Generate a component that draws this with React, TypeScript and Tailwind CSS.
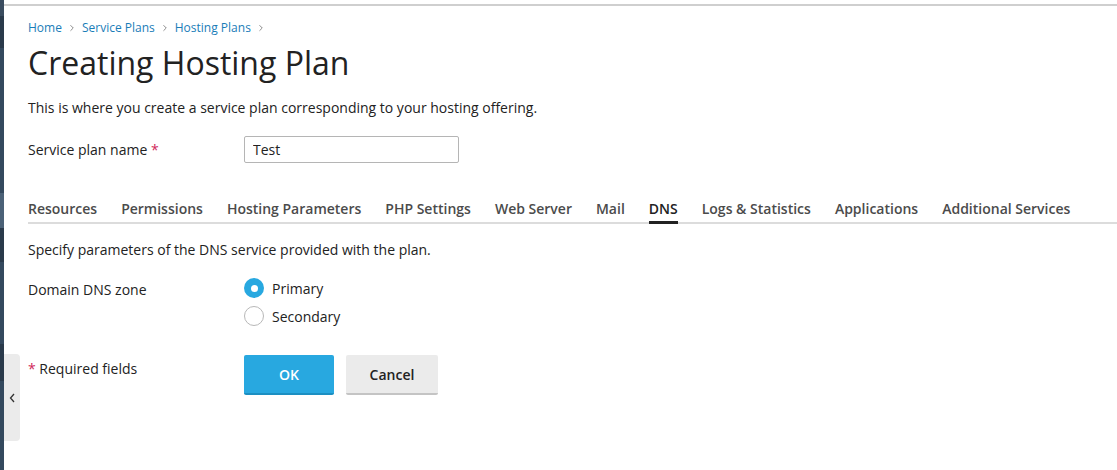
import { ChevronRight } from "lucide-react";

const tabs = [
  "Resources",
  "Permissions",
  "Hosting Parameters",
  "PHP Settings",
  "Web Server",
  "Mail",
  "DNS",
  "Logs & Statistics",
  "Applications",
  "Additional Services",
];

const crumbs = ["Home", "Service Plans", "Hosting Plans"];

function Radio({ checked, label }: { checked?: boolean; label: string }) {
  return (
    <label className="flex items-center gap-[8px] h-[28px]">
      {checked ? (
        <span className="w-[20px] h-[20px] rounded-full bg-[#28a8e0] flex items-center justify-center">
          <span className="w-[7px] h-[7px] rounded-full bg-white" />
        </span>
      ) : (
        <span className="w-[20px] h-[20px] rounded-full border border-[#b8b8b8] bg-white" />
      )}
      <span>{label}</span>
    </label>
  );
}

export default function App() {
  return (
    <div
      className="flex w-[1117px] h-[470px] bg-white text-[14px] text-[#222] overflow-hidden"
      style={{ fontFamily: '"Open Sans", sans-serif' }}
    >
      {/* sidebar edge */}
      <div className="w-[4px] shrink-0 flex flex-col bg-[#34495e]">
        <div className="h-[16px] bg-[#3a4c5f]" />
        <div className="h-[32px] bg-[#2a3a4b]" />
        <div className="h-[145px]" />
        <div className="h-[35px] bg-[#4b6177]" />
        <div className="h-[34px] bg-[#2a3a4b]" />
        <div className="h-[82px]" />
        <div className="h-[37px] bg-[#2a3a4b]" />
      </div>

      <div className="relative flex-1 flex flex-col">
        <div className="h-[4px]" />
        <div className="h-[2px] bg-[#cfcfcf]" />

        <button className="absolute left-0 top-[354px] w-[16px] h-[87px] bg-[#ebebeb] rounded-r-[4px] flex items-center justify-center text-[#333]">
          <svg width="8" height="12" viewBox="0 0 8 12" fill="none" stroke="currentColor" strokeWidth="1.3">
            <path d="M6 2L2.5 6L6 10" />
          </svg>
        </button>

        <div className="pl-[24px] flex flex-col">
          <nav className="mt-[14px] flex items-center text-[12px] text-[#1a7db8] leading-[16px]">
            {crumbs.map((c) => (
              <span key={c} className="flex items-center">
                <span>{c}</span>
                <ChevronRight size={10} strokeWidth={1.8} className="mx-[5px] text-[#666]" />
              </span>
            ))}
          </nav>

          <h1 className="mt-[5px] text-[32px] leading-[44px] text-[#222]">Creating Hosting Plan</h1>

          <p className="mt-[13px] leading-[20px]">
            This is where you create a service plan corresponding to your hosting offering.
          </p>

          <div className="mt-[18px] flex items-center">
            <div className="w-[216px]">
              Service plan name <span className="text-[#d02a5b]">*</span>
            </div>
            <input
              defaultValue="Test"
              className="w-[215px] h-[27px] border border-[#b5b5b5] rounded-[2px] px-[8px] text-[14px] text-[#222] outline-none"
            />
          </div>

          <div className="mt-[36px] flex gap-[24px] border-b-2 border-[#dcdcdc] font-semibold text-[#4b4b4b]">
            {tabs.map((t) => (
              <div
                key={t}
                className={
                  t === "DNS"
                    ? "pb-[1px] -mb-[2px] border-b-[3px] border-[#222] text-[#222] leading-[20px]"
                    : "pb-[3px] leading-[20px]"
                }
              >
                {t}
              </div>
            ))}
          </div>

          <p className="mt-[16px] leading-[20px]">Specify parameters of the DNS service provided with the plan.</p>

          <div className="mt-[14px] flex">
            <div className="w-[216px] pt-[6px] leading-[20px]">Domain DNS zone</div>
            <div className="flex flex-col">
              <Radio checked label="Primary" />
              <Radio label="Secondary" />
            </div>
          </div>

          <div className="mt-[25px] flex">
            <div className="w-[216px] pt-[4px] leading-[20px]">
              <span className="text-[#d02a5b]">*</span> Required fields
            </div>
            <div className="flex gap-[12px]">
              <button className="w-[90px] h-[40px] rounded-[2px] bg-[#28a8e0] border-b-2 border-[#1c8fc2] text-white font-semibold">
                OK
              </button>
              <button className="w-[92px] h-[40px] rounded-[2px] bg-[#ebebeb] border-b-2 border-[#c4c4c4] text-[#222] font-semibold">
                Cancel
              </button>
            </div>
          </div>
        </div>
      </div>
    </div>
  );
}
